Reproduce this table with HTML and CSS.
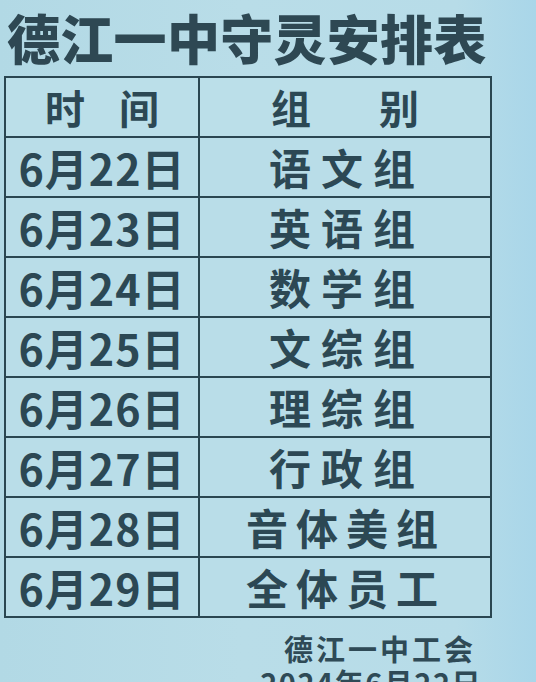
FILE: index.html
```html
<!DOCTYPE html>
<html lang="zh-CN">
<head>
<meta charset="utf-8">
<title>德江一中守灵安排表</title>
<link rel="stylesheet" href="styles.css">
</head>
<body>
<div class="sheet">
  <h1 class="title">德江一中守灵安排表</h1>
  <table class="schedule">
    <colgroup><col class="c-date"><col class="c-group"></colgroup>
    <thead>
      <tr><th class="h-date">时<span class="gap"></span>间</th><th class="h-group">组<span class="gap wide"></span>别</th></tr>
    </thead>
    <tbody>
      <tr><td class="date">6月22日</td><td class="group">语文组</td></tr>
      <tr><td class="date">6月23日</td><td class="group">英语组</td></tr>
      <tr><td class="date">6月24日</td><td class="group">数学组</td></tr>
      <tr><td class="date">6月25日</td><td class="group">文综组</td></tr>
      <tr><td class="date">6月26日</td><td class="group">理综组</td></tr>
      <tr><td class="date">6月27日</td><td class="group">行政组</td></tr>
      <tr><td class="date">6月28日</td><td class="group four">音体美组</td></tr>
      <tr><td class="date">6月29日</td><td class="group four">全体员工</td></tr>
    </tbody>
  </table>
  <div class="sign">
    <div class="org">德江一中工会</div>
    <div class="when">2024年6月22日</div>
  </div>
</div>
</body>
</html>
```
FILE: styles.css
```css
html, body {
  margin: 0;
  padding: 0;
  height: 100%;
  overflow: hidden;
}
body {
  background: linear-gradient(90deg, #b2d9e5 0%, #b9dde8 45%, #b7dce8 85%, #a9d6e9 100%);
  color: #2c4854;
  font-family: "Noto Sans CJK SC", "Noto Sans", sans-serif;
}
.sheet {
  padding: 5px 0 0 0;
}
.title {
  margin: 0 0 0 7px;
  width: 490px;
  font-size: 53px;
  line-height: 64px;
  font-weight: 900;
  letter-spacing: 0.3px;
  white-space: nowrap;
  color: #2e4853;
}
.schedule {
  margin: 7px 0 0 4px;
  width: 488px;
  border-collapse: collapse;
  table-layout: fixed;
  border: 2px solid #2a4651;
}
.c-date { width: 194px; }
.schedule th, .schedule td {
  border: 2px solid #2a4651;
  height: 58px;
  padding: 0;
  text-align: center;
  vertical-align: middle;
  font-weight: 700;
  white-space: nowrap;
  line-height: 1;
}
.schedule th {
  font-size: 40px;
  background: #bbdfe9;
}
.schedule td {
  background: #b9dde8;
}
.gap { display: inline-block; width: 34px; }
.gap.wide { width: 68px; }
.date {
  font-size: 43px;
  letter-spacing: 1px;
}
.group {
  font-size: 42px;
  letter-spacing: 10px;
  text-indent: 4px;
}
.group.four {
  letter-spacing: 8px;
  text-indent: 2px;
}
.sign {
  display: flex;
  flex-direction: column;
  align-items: flex-end;
  padding-right: 54px;
  margin-top: 13px;
  font-weight: 700;
  color: #2f4a56;
}
.org {
  font-size: 29px;
  line-height: 34px;
  letter-spacing: 3px;
  margin-right: 6px;
}
.when {
  font-size: 29px;
  line-height: 34px;
  letter-spacing: 1.5px;
}
```
